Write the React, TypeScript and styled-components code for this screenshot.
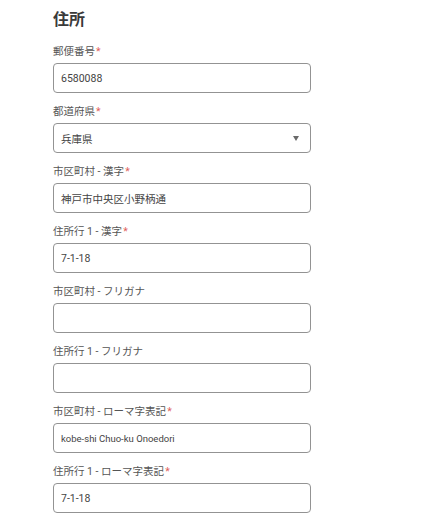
import React from "react";
import styled, { createGlobalStyle } from "styled-components";

const Global = createGlobalStyle`
  html, body { margin: 0; padding: 0; background: #ffffff; }
  body { font-family: Roboto, "Noto Sans CJK JP", sans-serif; color: #444; }
`;

const Section = styled.section`
  padding: 10px 0 0 53px;
  width: 258px;
  display: flex;
  flex-direction: column;
`;

const Heading = styled.h2`
  margin: 0 0 14px;
  font-size: 16px;
  line-height: 20px;
  font-weight: 700;
  color: #3a3a3a;
`;

const Fields = styled.div`
  display: flex;
  flex-direction: column;
  gap: 11px;
`;

const Field = styled.div`
  display: flex;
  flex-direction: column;
`;

const Label = styled.label`
  font-size: 10.5px;
  line-height: 16px;
  color: #555;
  margin-bottom: 3px;
`;

const Req = styled.span`
  color: #e0605a;
  margin-left: 1px;
`;

const Box = styled.div<{ $small?: boolean }>`
  box-sizing: border-box;
  height: 30px;
  border: 1px solid #939393;
  border-radius: 4px;
  display: flex;
  align-items: center;
  padding: 0 7px;
  font-size: ${(p) => (p.$small ? "9.5px" : "10.5px")};
  color: #444;
  background: #fff;
`;

const SelectBox = styled(Box)`
  justify-content: space-between;
  padding-right: 11px;
`;

const Arrow = styled.span`
  width: 0;
  height: 0;
  border-left: 3.5px solid transparent;
  border-right: 3.5px solid transparent;
  border-top: 5px solid #6a6a6a;
`;

type F = { label: string; value?: string; req?: boolean; select?: boolean; small?: boolean };

const fields: F[] = [
  { label: "郵便番号", value: "6580088", req: true },
  { label: "都道府県", value: "兵庫県", req: true, select: true },
  { label: "市区町村 - 漢字", value: "神戸市中央区小野柄通", req: true },
  { label: "住所行 1 - 漢字", value: "7-1-18", req: true },
  { label: "市区町村 - フリガナ", value: "" },
  { label: "住所行 1 - フリガナ", value: "" },
  { label: "市区町村 - ローマ字表記", value: "kobe-shi Chuo-ku Onoedori", req: true, small: true },
  { label: "住所行 1 - ローマ字表記", value: "7-1-18", req: true },
];

export default function App() {
  return (
    <>
      <Global />
      <Section>
        <Heading>住所</Heading>
        <Fields>
          {fields.map((f) => (
            <Field key={f.label}>
              <Label>
                {f.label}
                {f.req && <Req>*</Req>}
              </Label>
              {f.select ? (
                <SelectBox>
                  <span>{f.value}</span>
                  <Arrow />
                </SelectBox>
              ) : (
                <Box $small={f.small}>{f.value}</Box>
              )}
            </Field>
          ))}
        </Fields>
      </Section>
    </>
  );
}
